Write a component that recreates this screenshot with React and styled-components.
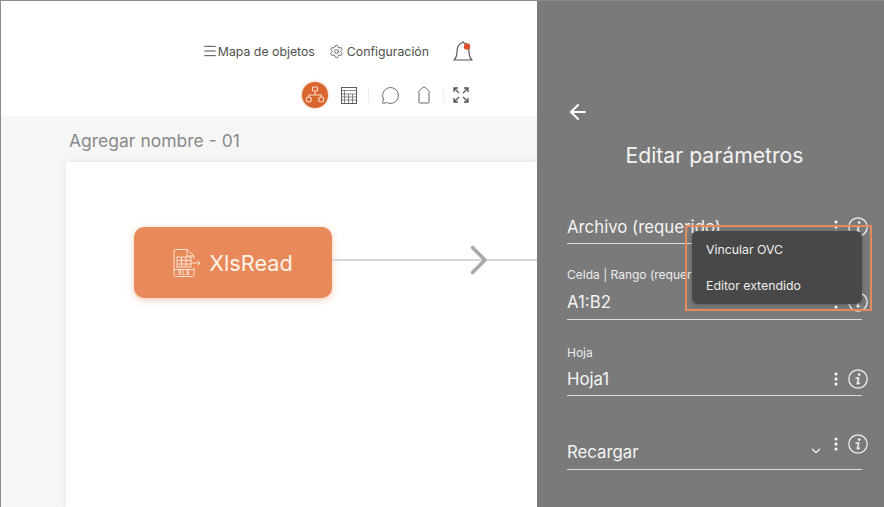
import React from 'react';
import styled, { createGlobalStyle } from 'styled-components';
import { Menu, Settings, MessageCircle, ChevronDown, ArrowLeft } from 'lucide-react';

const GlobalStyle = createGlobalStyle`
  html, body {
    margin: 0;
    padding: 0;
    background: #fff;
  }
  body {
    font-family: Inter, "Open Sans", "Liberation Sans", sans-serif;
  }
  * {
    box-sizing: border-box;
  }
`;

const Shell = styled.div`
  display: flex;
  width: 884px;
  height: 507px;
  overflow: hidden;
  border-top: 1px solid #8c8c8c;
  border-left: 1px solid #8c8c8c;
`;

const Main = styled.main`
  display: flex;
  flex-direction: column;
  flex: 0 0 536px;
  min-width: 0;
`;

const Header = styled.header`
  display: flex;
  flex-direction: column;
  flex: 0 0 115px;
  align-items: flex-end;
  background: #fff;
  padding: 37px 62px 0 0;
`;

const TopNav = styled.nav`
  display: flex;
  align-items: center;
  height: 26px;
`;

const NavLink = styled.a`
  display: flex;
  align-items: center;
  gap: ${(p) => p.$gap || 0}px;
  margin-right: ${(p) => p.$after || 0}px;
  color: #4f4f4f;
  font-size: 12.3px;
  white-space: nowrap;
`;

const BellIcon = () => (
  <svg width="24" height="26" viewBox="0 0 24 26" fill="none" stroke="#555" strokeWidth="1.2">
    <path d="M3 22c2-2 3-4 3-8 0-5 2-8 5-9 .2-1.500 1.800-1.500 2 0 3 1 5 4 5 9 0 4 1 6 3 8z" strokeLinejoin="round" />
    <circle cx="16" cy="8.500" r="3.200" fill="#d9512c" stroke="none" />
  </svg>
);

const ToolRow = styled.div`
  display: flex;
  align-items: center;
  height: 28px;
  margin-top: 17px;
  margin-right: 6px;
`;

const ToolBubble = styled.span`
  display: flex;
  align-items: center;
  justify-content: center;
  width: 26px;
  height: 26px;
  margin-right: ${(p) => p.$after || 0}px;
  border-radius: 50%;
  background: #d9662f;
  box-shadow: 0 0 3px rgba(217, 102, 47, 0.5);
`;

const Tool = styled.span`
  display: flex;
  align-items: center;
  justify-content: center;
  margin-right: ${(p) => p.$after || 0}px;
  color: #555;
`;

const ToolDivider = styled.span`
  width: 1px;
  height: 14px;
  margin-right: ${(p) => p.$after || 0}px;
  background: #eeeeee;
`;

const NetworkIcon = () => (
  <svg width="20" height="20" viewBox="0 0 20 20" fill="none" stroke="#fbd9c6" strokeWidth="1.100">
    <rect x="7.500" y="2" width="5" height="4" rx="0.800" />
    <circle cx="3.800" cy="14.500" r="2.500" />
    <circle cx="16.200" cy="14.500" r="2.500" />
    <path d="M10 6v4M3.800 12v-2h12.400v2" />
  </svg>
);

const TableIcon = () => (
  <svg width="16" height="17" viewBox="0 0 16 17" fill="none" stroke="#5a5a5a" strokeWidth="1">
    <rect x="0.500" y="0.500" width="15" height="16" />
    <path d="M0.500 3.500h15M3.500 3.500v13M0.500 7h15M0.500 10h15M0.500 13h15M7.500 7v9.500M11.500 7v9.500" strokeWidth="0.700" />
  </svg>
);

const TagIcon = () => (
  <svg width="12" height="18" viewBox="0 0 12 18" fill="none" stroke="#666" strokeWidth="1">
    <path d="M1 5.500C1 4.500 5 1 6 1s5 3.500 5 4.500V16a1 1 0 0 1-1 1H2a1 1 0 0 1-1-1z" strokeLinejoin="round" />
  </svg>
);

const ExpandIcon = () => (
  <svg width="16" height="16" viewBox="0 0 16 16" fill="none" stroke="#555" strokeWidth="1.300">
    <path d="M1 5V1h4M1 1l5 5M15 5V1h-4M15 1l-5 5M1 11v4h4M1 15l5-5M15 11v4h-4M15 15l-5-5" />
  </svg>
);

const Canvas = styled.section`
  display: flex;
  flex-direction: column;
  flex: 1;
  min-height: 0;
  padding: 14px 0 0 65px;
  background: #f6f6f6;
`;

const DiagramTitle = styled.h2`
  margin: 0 0 10px 3px;
  color: #8a8a8a;
  font-size: 17.500px;
  font-weight: 400;
  line-height: 22px;
`;

const Sheet = styled.div`
  display: flex;
  flex: 1;
  align-items: flex-start;
  padding: 65px 0 0 68px;
  background: #fff;
  box-shadow: 0 0 8px rgba(0, 0, 0, 0.07);
`;

const NodeRow = styled.div`
  display: flex;
  flex: 1;
  align-items: center;
`;

const Node = styled.div`
  display: flex;
  flex: 0 0 198px;
  align-items: center;
  justify-content: center;
  gap: 6px;
  height: 71px;
  padding-right: 2px;
  border-radius: 10px;
  background: #e8895a;
  box-shadow: 0 2px 7px rgba(232, 137, 90, 0.45);
  color: #fff4ea;
  font-size: 21.700px;
`;

const Connector = styled.div`
  position: relative;
  flex: 1;
  height: 2px;
  margin-top: -5px;
  background: #d6d6d6;
`;

const ConnectorHead = styled.svg`
  position: absolute;
  top: -14px;
  right: 49px;
`;

const XlsIcon = () => (
  <svg width="32" height="30" viewBox="0 0 32 30" fill="none" stroke="#fbe3d4" strokeWidth="1">
    <path d="M23 20v7a1.500 1.500 0 0 1-1.500 1.500h-17A1.500 1.500 0 0 1 3 27V3a1.500 1.500 0 0 1 1.500-1.500H16L23 8v3" />
    <path d="M16 1.500V8h7" />
    <rect x="6" y="9" width="14" height="10" />
    <path d="M6 12.500h14M6 16h14M10.500 9v10M15 9v10" />
    <path d="M20 15h9M26.500 12.500 29 15l-2.500 2.500" />
    <path d="M3 21.500h20" />
    <text x="13" y="27" fill="#fbe3d4" stroke="none" fontSize="5.500" fontWeight="700" letterSpacing="0.600" textAnchor="middle">XLS</text>
  </svg>
);

const Panel = styled.aside`
  position: relative;
  flex: 1;
  min-width: 0;
  padding: 0 22px 0 30px;
  background: #7a7a7a;
  color: #f4f4f4;
`;

const BackLink = styled.a`
  display: flex;
  margin: 99px 0 0 -1px;
  color: #fff;
`;

const PanelTitle = styled.h1`
  margin: 17px 0 41px;
  font-size: 21.200px;
  font-weight: 400;
  line-height: 28px;
  text-align: center;
`;

const Field = styled.div`
  margin-bottom: ${(p) => p.$after || 0}px;
  border-bottom: 1px solid #dcdcdc;
`;

const FieldLabel = styled.div`
  height: 16px;
  margin-bottom: 1px;
  color: #ececec;
  font-size: 12px;
  line-height: 16px;
  white-space: nowrap;
`;

const FieldRow = styled.div`
  display: flex;
  align-items: ${(p) => (p.$raised ? 'flex-start' : 'center')};
  height: ${(p) => p.$height || 33}px;
`;

const FieldValue = styled.span`
  flex: 1;
  align-self: ${(p) => (p.$low ? 'flex-end' : 'auto')};
  padding-bottom: ${(p) => (p.$low ? 7 : 0)}px;
  font-size: 16.800px;
  white-space: nowrap;
`;

const FieldActions = styled.span`
  display: flex;
  align-items: center;
  gap: 10px;
  margin-top: ${(p) => (p.$raised ? 3 : 0)}px;
  margin-right: -6px;
`;

const Caret = styled.span`
  display: flex;
  align-self: flex-end;
  margin-right: 11px;
  padding-bottom: 11px;
  color: #f4f4f4;
`;

const KebabIcon = () => (
  <svg width="4" height="14" viewBox="0 0 4 14" fill="#fff">
    <circle cx="2" cy="2" r="1.500" />
    <circle cx="2" cy="7" r="1.500" />
    <circle cx="2" cy="12" r="1.500" />
  </svg>
);

const InfoIcon = () => (
  <svg width="20" height="20" viewBox="0 0 20 20" fill="none" stroke="#f4f4f4">
    <circle cx="10" cy="10" r="9.200" strokeWidth="1.200" />
    <circle cx="11.200" cy="5.600" r="1.300" fill="#f4f4f4" stroke="none" />
    <path d="M8 9h2.800L9.300 14.200c-.2.800.6 1 2.200-.2" strokeWidth="1.500" strokeLinecap="round" strokeLinejoin="round" />
  </svg>
);

const Highlight = styled.div`
  position: absolute;
  top: 224px;
  left: 148px;
  width: 187px;
  height: 86px;
  border: 2px solid #e58a5c;
  z-index: 2;
`;

const PopupMenu = styled.ul`
  position: absolute;
  top: 230px;
  left: 155px;
  display: flex;
  flex-direction: column;
  width: 170px;
  height: 73px;
  margin: 0;
  padding: 0 14px;
  border-radius: 6px;
  background: #484848;
  box-shadow: 0 1px 4px rgba(0, 0, 0, 0.25);
  list-style: none;
  z-index: 3;
`;

const PopupItem = styled.li`
  display: flex;
  flex: 1;
  align-items: center;
  color: #eeeeee;
  font-size: 12.300px;
  white-space: nowrap;
`;

const Actions = ({ raised }) => (
  <FieldActions $raised={raised}>
    <KebabIcon />
    <InfoIcon />
  </FieldActions>
);

const App = () => (
  <Shell>
    <GlobalStyle />
    <Main>
      <Header>
        <TopNav>
          <NavLink $after={14}>
            <Menu size={16} strokeWidth={1.5} />
            Mapa de objetos
          </NavLink>
          <NavLink $gap={3} $after={22}>
            <Settings size={15} strokeWidth={1.3} />
            Configuración
          </NavLink>
          <BellIcon />
        </TopNav>
        <ToolRow>
          <ToolBubble $after={13}>
            <NetworkIcon />
          </ToolBubble>
          <Tool $after={11}>
            <TableIcon />
          </Tool>
          <ToolDivider $after={12} />
          <Tool $after={18}>
            <MessageCircle size={19} strokeWidth={1.1} />
          </Tool>
          <Tool $after={13}>
            <TagIcon />
          </Tool>
          <ToolDivider $after={9} />
          <Tool>
            <ExpandIcon />
          </Tool>
        </ToolRow>
      </Header>
      <Canvas>
        <DiagramTitle>Agregar nombre - 01</DiagramTitle>
        <Sheet>
          <NodeRow>
            <Node>
              <XlsIcon />
              XlsRead
            </Node>
            <Connector>
              <ConnectorHead width="18" height="30" viewBox="0 0 18 30" fill="none" stroke="#a9a9a9" strokeWidth="3.600">
                <path d="M2.500 2.500 15 15 2.500 27.500" strokeLinecap="round" strokeLinejoin="round" />
              </ConnectorHead>
            </Connector>
          </NodeRow>
        </Sheet>
      </Canvas>
    </Main>
    <Panel>
      <BackLink>
        <ArrowLeft size={24} strokeWidth={2} />
      </BackLink>
      <PanelTitle>Editar parámetros</PanelTitle>
      <Field $after={23}>
        <FieldRow>
          <FieldValue>Archivo (requerido)</FieldValue>
          <Actions />
        </FieldRow>
      </Field>
      <Field $after={25}>
        <FieldLabel>Celda | Rango (requerido)</FieldLabel>
        <FieldRow $height={35}>
          <FieldValue>A1:B2</FieldValue>
          <Actions />
        </FieldRow>
      </Field>
      <Field $after={35}>
        <FieldLabel>Hoja</FieldLabel>
        <FieldRow>
          <FieldValue>Hoja1</FieldValue>
          <Actions />
        </FieldRow>
      </Field>
      <Field>
        <FieldRow $height={38} $raised>
          <FieldValue $low>Recargar</FieldValue>
          <Caret>
            <ChevronDown size={14} strokeWidth={2} />
          </Caret>
          <Actions raised />
        </FieldRow>
      </Field>
      <Highlight />
      <PopupMenu>
        <PopupItem>Vincular OVC</PopupItem>
        <PopupItem>Editor extendido</PopupItem>
      </PopupMenu>
    </Panel>
  </Shell>
);

export default App;
